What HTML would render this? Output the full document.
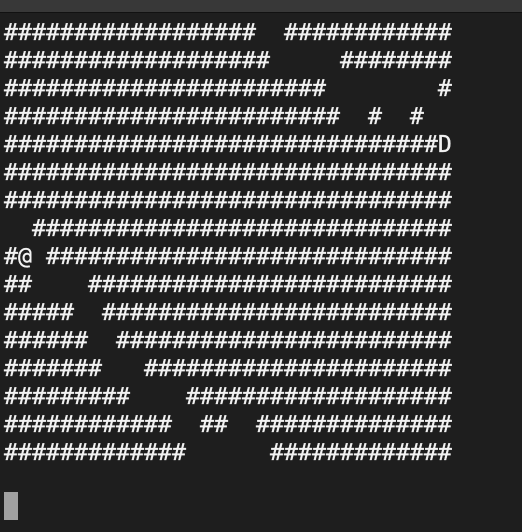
<!DOCTYPE html>
<html><head><meta charset="utf-8"><style>
html,body{margin:0;padding:0;background:#1e1e1e;width:522px;height:532px;overflow:hidden}
.bar{position:absolute;left:0;top:0;width:522px;height:12px;background:#383838;border-bottom:1px solid #111}
pre{position:absolute;left:4px;top:19px;margin:0;font-family:"DejaVu Sans Mono",monospace;font-size:23.25px;line-height:28px;color:#f2f2f2;white-space:pre;-webkit-text-stroke:0.3px #f2f2f2}
.cur{position:absolute;left:4px;top:492px;width:14px;height:28px;background:#a0a0a0}
</style></head><body>
<div class="bar"></div>
<pre>##################  ############
###################     ########
#######################        #
########################  #  #
###############################D
################################
################################
  ##############################
#@ #############################
##    ##########################
#####  #########################
######  ########################
#######   ######################
#########    ###################
############  ##  ##############
#############      #############</pre>
<div class="cur"></div>
</body></html>
